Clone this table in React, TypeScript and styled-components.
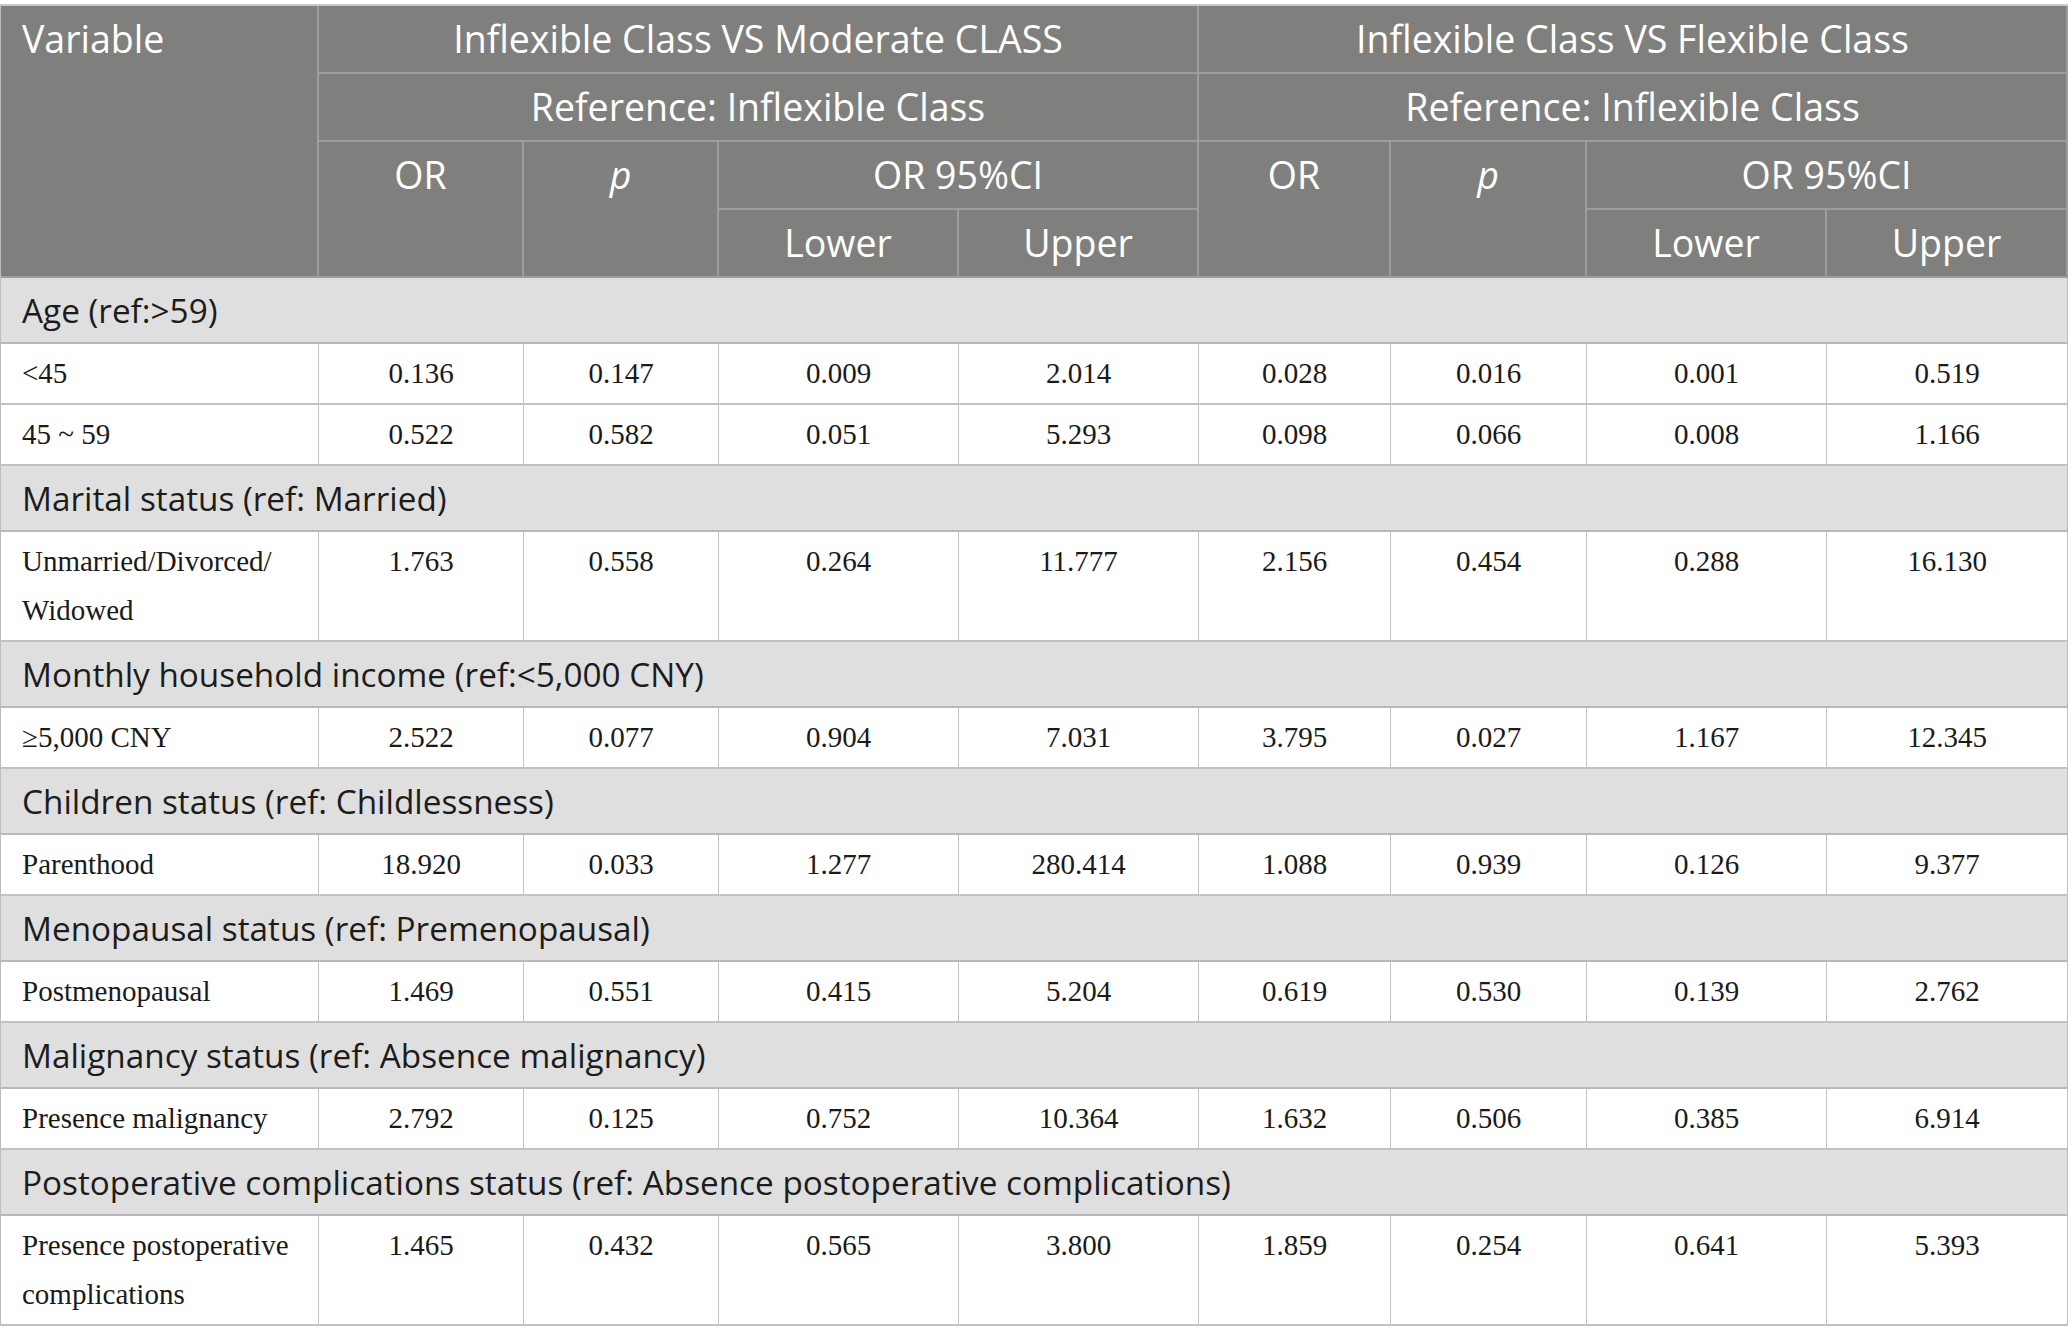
import React from 'react';
import styled, { createGlobalStyle } from 'styled-components';

const GlobalStyle = createGlobalStyle`
  html, body {
    margin: 0;
    padding: 0;
    background: #ffffff;
  }
`;

const Page = styled.div`
  padding-top: 4px;
  width: 2068px;
`;

const Table = styled.table`
  width: 2067px;
  table-layout: fixed;
  border-collapse: separate;
  border-spacing: 0;
  border-top: 2px solid #c9c9c9;
  border-left: 1px solid #bdbdbd;
`;

const Th = styled.th<{ $left?: boolean; $italic?: boolean }>`
  box-sizing: border-box;
  background: #7f807e;
  color: #ffffff;
  font-family: 'Open Sans', 'Noto Sans', sans-serif;
  font-size: 37.5px;
  font-weight: 400;
  font-style: ${(p) => (p.$italic ? 'italic' : 'normal')};
  line-height: 50px;
  padding: 8px 21px 8px;
  text-align: ${(p) => (p.$left ? 'left' : 'center')};
  vertical-align: top;
  border-right: 2px solid #9d9e9c;
  border-bottom: 2px solid #9d9e9c;
  white-space: nowrap;
`;

const GroupCell = styled.td`
  box-sizing: border-box;
  background: #e0dfe0;
  color: #1c1c1c;
  font-family: 'Open Sans', 'Noto Sans', sans-serif;
  font-size: 33.3px;
  line-height: 48px;
  padding: 8px 21px 8px;
  text-align: left;
  border-right: 1px solid #bdbdbd;
  border-bottom: 2px solid #b9b9b9;
  white-space: nowrap;
`;

const Td = styled.td<{ $left?: boolean }>`
  box-sizing: border-box;
  background: #ffffff;
  color: #1a1a1a;
  font-family: 'Liberation Serif', 'Times New Roman', serif;
  font-size: 29px;
  line-height: 49px;
  padding: 5px 21px 5px;
  text-align: ${(p) => (p.$left ? 'left' : 'center')};
  vertical-align: top;
  border-right: 1px solid #c2c2c2;
  border-bottom: 2px solid #c2c2c2;
`;

const widths = [318, 205, 195, 240, 240, 192, 196, 240, 241];

type Row = { label: string; values: string[] };
type Group = { title: string; rows: Row[] };

const groups: Group[] = [
  {
    title: 'Age (ref:>59)',
    rows: [
      { label: '<45', values: ['0.136', '0.147', '0.009', '2.014', '0.028', '0.016', '0.001', '0.519'] },
      { label: '45 ~ 59', values: ['0.522', '0.582', '0.051', '5.293', '0.098', '0.066', '0.008', '1.166'] },
    ],
  },
  {
    title: 'Marital status (ref: Married)',
    rows: [
      {
        label: 'Unmarried/Divorced/ Widowed',
        values: ['1.763', '0.558', '0.264', '11.777', '2.156', '0.454', '0.288', '16.130'],
      },
    ],
  },
  {
    title: 'Monthly household income (ref:<5,000 CNY)',
    rows: [
      { label: '≥5,000 CNY', values: ['2.522', '0.077', '0.904', '7.031', '3.795', '0.027', '1.167', '12.345'] },
    ],
  },
  {
    title: 'Children status (ref: Childlessness)',
    rows: [
      { label: 'Parenthood', values: ['18.920', '0.033', '1.277', '280.414', '1.088', '0.939', '0.126', '9.377'] },
    ],
  },
  {
    title: 'Menopausal status (ref: Premenopausal)',
    rows: [
      { label: 'Postmenopausal', values: ['1.469', '0.551', '0.415', '5.204', '0.619', '0.530', '0.139', '2.762'] },
    ],
  },
  {
    title: 'Malignancy status (ref: Absence malignancy)',
    rows: [
      { label: 'Presence malignancy', values: ['2.792', '0.125', '0.752', '10.364', '1.632', '0.506', '0.385', '6.914'] },
    ],
  },
  {
    title: 'Postoperative complications status (ref: Absence postoperative complications)',
    rows: [
      {
        label: 'Presence postoperative complications',
        values: ['1.465', '0.432', '0.565', '3.800', '1.859', '0.254', '0.641', '5.393'],
      },
    ],
  },
];

const comparisons = ['Inflexible Class VS Moderate CLASS', 'Inflexible Class VS Flexible Class'];

const App = (): React.ReactElement => {
  return (
    <Page>
      <GlobalStyle />
      <Table>
        <colgroup>
          {widths.map((w, i) => (
            <col key={i} style={{ width: w }} />
          ))}
        </colgroup>
        <thead>
          <tr>
            <Th $left rowSpan={4}>
              Variable
            </Th>
            {comparisons.map((c) => (
              <Th key={c} colSpan={4}>
                {c}
              </Th>
            ))}
          </tr>
          <tr>
            {comparisons.map((c) => (
              <Th key={c} colSpan={4}>
                Reference: Inflexible Class
              </Th>
            ))}
          </tr>
          <tr>
            {comparisons.map((c) => (
              <React.Fragment key={c}>
                <Th rowSpan={2}>OR</Th>
                <Th rowSpan={2} $italic>
                  p
                </Th>
                <Th colSpan={2}>OR 95%CI</Th>
              </React.Fragment>
            ))}
          </tr>
          <tr>
            {comparisons.map((c) => (
              <React.Fragment key={c}>
                <Th>Lower</Th>
                <Th>Upper</Th>
              </React.Fragment>
            ))}
          </tr>
        </thead>
        <tbody>
          {groups.map((g) => (
            <React.Fragment key={g.title}>
              <tr>
                <GroupCell colSpan={9}>{g.title}</GroupCell>
              </tr>
              {g.rows.map((r) => (
                <tr key={r.label}>
                  <Td $left>{r.label}</Td>
                  {r.values.map((v, i) => (
                    <Td key={i}>{v}</Td>
                  ))}
                </tr>
              ))}
            </React.Fragment>
          ))}
        </tbody>
      </Table>
    </Page>
  );
};

export default App;
